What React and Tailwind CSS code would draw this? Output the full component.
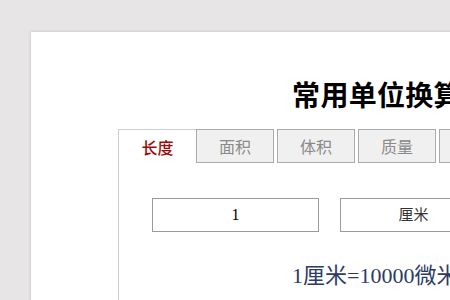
import React, { useState } from "react";

const tabs = ["长度", "面积", "体积", "质量", "温度"];

function App() {
    const [active, setActive] = useState(0);

    return (
        <div className="w-[450px] h-[300px] overflow-hidden bg-[#e7e5e5] pl-[31px] pt-[32px] font-['Noto_Sans_CJK_SC',sans-serif]">
            <div className="w-[692px] h-[400px] bg-white shadow-[0_0_3px_rgba(0,0,0,0.18)] pt-[48px] px-[87px]">
                {/* Title */}
                <h1 className="text-center text-[28px] leading-[28px] font-bold text-black tracking-[0.3px]">
                    常用单位换算
                </h1>

                {/* Tabs */}
                <div className="mt-[21px] flex">
                    {tabs.map((t, i) =>
                        i === active ? (
                            <button
                                key={t}
                                onClick={() => setActive(i)}
                                className="w-[78px] h-[34px] shrink-0 bg-white border-t border-l border-[#cfcfcf] text-[16px] font-medium text-[#9c0a0a]"
                            >
                                {t}
                            </button>
                        ) : (
                            <button
                                key={t}
                                onClick={() => setActive(i)}
                                className={
                                    i === active + 1
                                        ? "w-[78px] h-[34px] shrink-0 bg-[#f0f0f0] border border-[#aaaaaa] text-[16px] text-[#8a8a8a]"
                                        : "w-[78px] h-[34px] shrink-0 ml-[3px] bg-[#f0f0f0] border border-[#aaaaaa] text-[16px] text-[#8a8a8a]"
                                }
                            >
                                {t}
                            </button>
                        )
                    )}
                </div>

                {/* Panel */}
                <div className="border-l border-[#cfcfcf] pt-[35px] pb-10 px-[33px]">
                    <div className="flex gap-[21px] font-['Liberation_Serif','Noto_Sans_CJK_SC',serif]">
                        <div className="w-[167px] h-[34px] shrink-0 border border-[#9a9a9a] flex items-center justify-center text-[16px] text-black">
                            1
                        </div>
                        <div className="w-[167px] h-[34px] shrink-0 border border-[#9a9a9a] flex items-center text-[15px] text-[#333]">
                            <span className="flex-1 text-center">厘米</span>
                            <span className="w-[20px] text-[10px] text-[#555]">▼</span>
                        </div>
                        <div className="w-[167px] h-[34px] shrink-0 border border-[#9a9a9a] flex items-center text-[15px] text-[#333]">
                            <span className="flex-1 text-center">微米</span>
                            <span className="w-[20px] text-[10px] text-[#555]">▼</span>
                        </div>
                    </div>
                    <p className="mt-[30px] pl-[140px] whitespace-nowrap text-[22px] leading-[28px] text-[#2d3b66] font-['Liberation_Serif','Noto_Sans_CJK_SC',serif]">
                        1厘米=10000微米
                    </p>
                </div>
            </div>
        </div>
    );
}

export default App;
